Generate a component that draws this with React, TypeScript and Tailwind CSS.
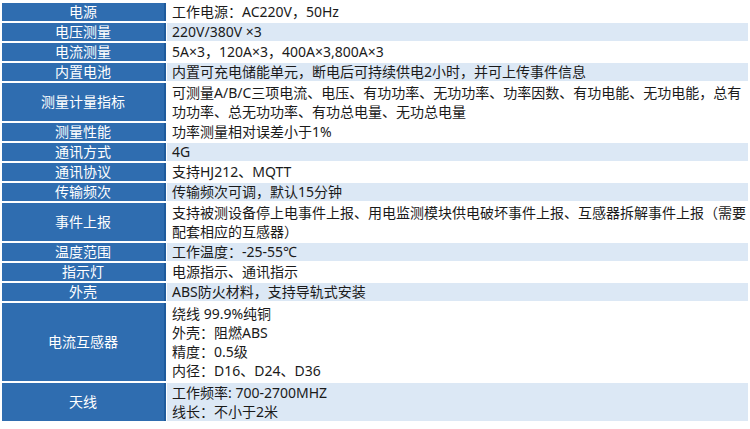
const FONT = "font-['Noto_Sans','Noto_Sans_CJK_SC',sans-serif]";

type Row = { label: string; lines: string[]; shade: boolean; pad?: boolean };

const ROWS: Row[] = [
  { label: "电源", lines: ["工作电源：AC220V，50Hz"], shade: false },
  { label: "电压测量", lines: ["220V/380V ×3"], shade: true },
  { label: "电流测量", lines: ["5A×3，120A×3，400A×3,800A×3"], shade: false },
  { label: "内置电池", lines: ["内置可充电储能单元，断电后可持续供电2小时，并可上传事件信息"], shade: true },
  {
    label: "测量计量指标",
    lines: [
      "可测量A/B/C三项电流、电压、有功功率、无功功率、功率因数、有功电能、无功电能，总有",
      "功功率、总无功功率、有功总电量、无功总电量",
    ],
    shade: false,
  },
  { label: "测量性能", lines: ["功率测量相对误差小于1%"], shade: false },
  { label: "通讯方式", lines: ["4G"], shade: true },
  { label: "通讯协议", lines: ["支持HJ212、MQTT"], shade: false },
  { label: "传输频次", lines: ["传输频次可调，默认15分钟"], shade: true },
  {
    label: "事件上报",
    lines: [
      "支持被测设备停上电事件上报、用电监测模块供电破坏事件上报、互感器拆解事件上报（需要",
      "配套相应的互感器）",
    ],
    shade: false,
  },
  { label: "温度范围", lines: ["工作温度：-25-55℃"], shade: true },
  { label: "指示灯", lines: ["电源指示、通讯指示"], shade: false },
  { label: "外壳", lines: ["ABS防火材料，支持导轨式安装"], shade: true },
  {
    label: "电流互感器",
    lines: ["绕线 99.9%纯铜", "外壳：阻燃ABS", "精度：0.5级", "内径：D16、D24、D36"],
    shade: false,
    pad: true,
  },
  { label: "天线", lines: ["工作频率: 700-2700MHZ", "线长：不小于2米"], shade: true },
];

export default function App() {
  return (
    <div className={`w-[750px] h-[429px] bg-white px-[2px] pt-[3px] ${FONT} text-[14px]`}>
      <div className="flex flex-col gap-[2px]">
        {ROWS.map((r) => {
          const multi = r.lines.length > 1;
          return (
            <div key={r.label} className="flex gap-px">
              {/* label cell */}
              <div className="w-[164px] shrink-0 flex items-center justify-center bg-[#2f6db0] border-r-2 border-[#1f5b9c] text-white leading-[18px]">
                {r.label}
              </div>
              <div
                className={`flex-1 pl-[5px] text-[#1a1a1a] whitespace-nowrap ${
                  r.shade ? "bg-[#dce8f5]" : "bg-white"
                } ${multi ? "leading-[19px]" : "leading-[18px]"} ${r.pad ? "py-px" : ""}`}
              >
                {r.lines.map((l, i) => (
                  <div key={i}>{l}</div>
                ))}
              </div>
            </div>
          );
        })}
      </div>
    </div>
  );
}
